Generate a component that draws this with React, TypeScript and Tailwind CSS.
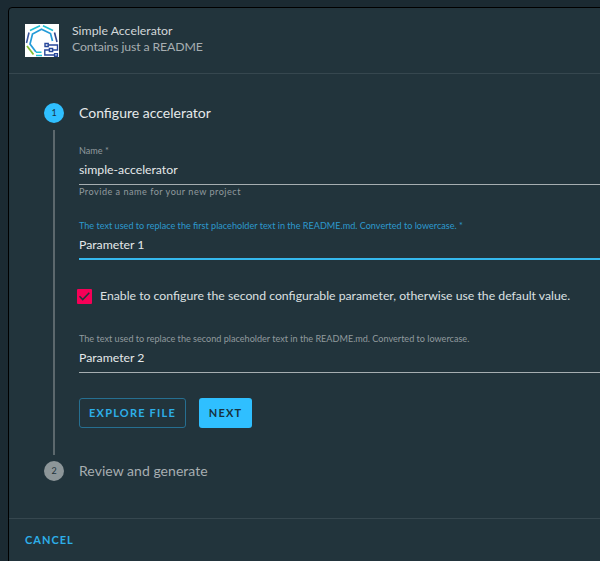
import React from "react";

function Logo() {
  return (
    <svg width="34" height="33" viewBox="0 0 34 33" fill="none" className="shrink-0 bg-white">
      <path d="M5 6.5 15 1.8" stroke="#20bfd3" strokeWidth="1.6" />
      <path d="M18 1.8 28 6.5" stroke="#20bfd3" strokeWidth="1.6" />
      <path d="M4 8.5 1.5 19" stroke="#3c579f" strokeWidth="1.6" />
      <path d="M29.5 8.5 32 18" stroke="#31478f" strokeWidth="1.6" />
      <path d="M2 22 8.5 30.5" stroke="#83bd32" strokeWidth="1.8" />
      <path d="M11 28.2H16.5M11 31.5H17" stroke="#20bfd3" strokeWidth="1.4" />
      <path d="M11 28 5 20 7.5 10 16.5 5.2 25.5 9.5 27.5 17" stroke="#249bd8" strokeWidth="1.7" />
      <g stroke="#28479a" strokeWidth="1.4">
        <path d="M20 19.5h3.2v3h-3.2zM24.4 24.5h3.2v3h-3.2zM29.6 29.6h2.8v2.6h-2.8z" />
        <path d="M23.5 21H32.5V26H28M24.4 26H19.8V31H29" />
      </g>
    </svg>
  );
}

function Field({
  label,
  value,
  labelClass,
  lineClass,
}: {
  label: string;
  value: string;
  labelClass: string;
  lineClass: string;
}) {
  return (
    <div className={lineClass}>
      <div className={`h-[14px] text-[9.1px] leading-[15px] ${labelClass}`}>{label}</div>
      <div className="mt-[4px] h-[18px] text-[12.25px] leading-[17px] text-[#e5e9ea]">{value}</div>
    </div>
  );
}

export default function App() {
  return (
    <div className="h-[561px] w-[600px] overflow-hidden bg-[#1b2a32] pt-[7px] pl-[8px] font-['Lato',sans-serif] whitespace-nowrap">
      <div className="flex h-[570px] w-[620px] flex-col rounded-[4px] border border-black bg-[#22343c]">
        <header className="flex h-[66px] shrink-0 gap-[13px] border-b border-[#36474f] pt-4 pl-4">
          <Logo />
          <div className="-mt-[1px] text-[12.3px] leading-[16px]">
            <div className="text-[#d3d7d9]">Simple Accelerator</div>
            <div className="tracking-[-0.13px] text-[#a7aeb1]">Contains just a README</div>
          </div>
        </header>

        <main className="flex h-[445px] shrink-0 gap-[15px] border-b border-[#36474f] pt-[29px] pl-[35px]">
          <div className="flex w-5 flex-col items-center">
            <div className="flex size-5 items-center justify-center rounded-full bg-[#2fbfff] text-[9px] text-[#17323f]">1</div>
            <div className="mt-[7px] h-[325px] w-[2px] bg-[#5c686d]" />
            <div className="mt-[6px] flex size-5 items-center justify-center rounded-full bg-[#8d9699] text-[9px] text-[#22343c]">2</div>
          </div>
          <div className="flex-1">
            <div className="h-5 text-[14px] leading-5 text-[#e5e9ea]">Configure accelerator</div>
            <div className="mt-[20px] h-[56px]">
              <Field label="Name *" value="simple-accelerator" labelClass="text-[#919a9e]" lineClass="h-[42px] border-b border-[#a6aeb1]" />
              <div className="h-[14px] text-[9.1px] leading-[13px] tracking-[0.5px] text-[#919a9e]">Provide a name for your new project</div>
            </div>
            <div className="mt-[19px]">
              <Field label="The text used to replace the first placeholder text in the README.md. Converted to lowercase. *" value="Parameter 1" labelClass="text-[#2d99cd]" lineClass="h-[42px] border-b-2 border-[#35b8ed]" />
            </div>
            <div className="mt-[26px] flex h-5 items-center">
              <div className="-ml-[2px] flex size-[15px] items-center justify-center rounded-[1px] bg-[#f70057]">
                <svg width="13" height="11" viewBox="0 0 13 11" fill="none">
                  <path d="m1.5 5.3 3.2 3.2 6.6-6.7" stroke="#22343c" strokeWidth="1.6" />
                </svg>
              </div>
              <span className="ml-2 h-5 text-[12.25px] leading-[19px] text-[#dce0e2]">Enable to configure the second configurable parameter, otherwise use the default value.</span>
            </div>
            <div className="mt-[25px]">
              <Field label="The text used to replace the second placeholder text in the README.md. Converted to lowercase." value="Parameter 2" labelClass="text-[#919a9e]" lineClass="h-[42px] border-b border-[#a6aeb1]" />
            </div>
            <div className="mt-[25px] flex gap-[13px]">
              <button className="h-[30px] w-[107px] rounded-[3px] border border-[#266f91] text-[11px] font-bold tracking-[1.2px] text-[#2daee8]">EXPLORE FILE</button>
              <button className="h-[30px] w-[53px] rounded-[3px] bg-[#2fbfff] text-[11px] font-bold tracking-[1.2px] text-[#17323f]">NEXT</button>
            </div>
            <div className="mt-[33px] h-5 text-[14px] leading-5 tracking-[0.04px] text-[#a7aeb1]">Review and generate</div>
          </div>
        </main>
        <footer className="pt-[13px] pl-4 text-[11px] leading-4 font-bold tracking-[1px] text-[#2daee8]">CANCEL</footer>
      </div>
    </div>
  );
}
